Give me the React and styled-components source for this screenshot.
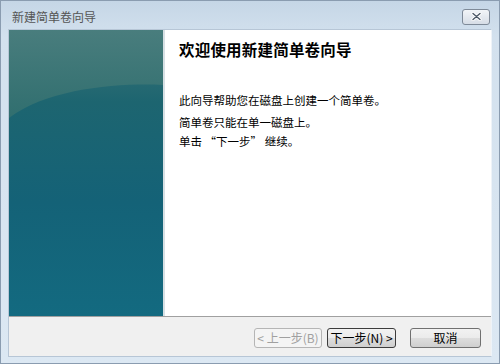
import styled, { createGlobalStyle } from "styled-components"

const Global = createGlobalStyle`
  html, body { margin: 0; padding: 0; }
  body {
    width: 500px;
    height: 364px;
    overflow: hidden;
    font-family: "Noto Sans CJK SC", "Liberation Sans", sans-serif;
  }
`

const Window = styled.div`
  width: 500px;
  height: 364px;
  box-sizing: border-box;
  background: linear-gradient(180deg, #c5d6e6 0%, #d3e1ee 10%, #dce8f3 100%);
  border: 1px solid #8a9cb0;
  display: flex;
  flex-direction: column;
  padding: 0 7px 6px 7px;
`

const TitleBar = styled.div`
  height: 28px;
  display: flex;
  align-items: center;
  justify-content: space-between;
  flex-shrink: 0;
`

const Title = styled.div`
  font-size: 12px;
  color: #555;
  padding-left: 4px;
  padding-top: 2px;
`

const CloseButton = styled.div`
  width: 28px;
  height: 16px;
  margin-top: 3px;
  margin-right: 2px;
  box-sizing: border-box;
  border: 1px solid #7e8a98;
  border-radius: 3px;
  background: linear-gradient(180deg, #f2f5f8, #d6dde6);
  display: flex;
  align-items: center;
  justify-content: center;
`

const Body = styled.div`
  flex: 1;
  display: flex;
  flex-direction: column;
  border: 1px solid #b7c6d6;
  border-right-color: #eef3f8;
`

const Main = styled.div`
  height: 286px;
  display: flex;
  background: #ffffff;
  border-bottom: 1px solid #a0a0a0;
`

const SidePanel = styled.div`
  width: 154px;
  flex-shrink: 0;
  position: relative;
  background: linear-gradient(180deg, #3f7677 0%, #1d6570 25%, #146277 60%, #136a80 100%);
  border-right: 2px solid #d7e0e4;
  overflow: hidden;
`

const Content = styled.div`
  flex: 1;
  padding: 8px 0 0 14px;
  color: #000;
`

const Heading = styled.h1`
  margin: 0;
  font-size: 15.5px;
  font-weight: bold;
  line-height: 22px;
  letter-spacing: 0.2px;
`

const Text = styled.p`
  margin: 0;
  font-size: 11.5px;
  line-height: 14px;
  margin-top: ${(p) => p.$gap}px;
`

const Footer = styled.div`
  flex: 1;
  background: #f0f0f0;
  display: flex;
  align-items: center;
  justify-content: flex-end;
  padding: 0 10px 0 0;
`

const Button = styled.div`
  width: ${(p) => p.$w}px;
  height: 20px;
  box-sizing: border-box;
  margin-left: ${(p) => p.$ml}px;
  border: 1px solid ${(p) => (p.$disabled ? "#b5b5b5" : p.$focus ? "#3c3c3c" : "#707070")};
  border-radius: 3px;
  background: ${(p) =>
    p.$disabled ? "#f4f4f4" : "linear-gradient(180deg, #f2f2f2 0%, #ebebeb 50%, #dddddd 51%, #cfcfcf 100%)"};
  color: ${(p) => (p.$disabled ? "#a0a0a0" : "#000")};
  font-size: 12px;
  display: flex;
  align-items: center;
  justify-content: center;
  margin-top: 2px;
`

const Panel = () => (
  <svg width="154" height="286" viewBox="0 0 154 286" style={{ position: "absolute", inset: 0 }}>
    <defs>
      <linearGradient id="hl" x1="0" y1="0" x2="0" y2="1">
        <stop offset="0" stopColor="#4a7e7e" />
        <stop offset="1" stopColor="#33706f" />
      </linearGradient>
    </defs>
    <path d="M0 0 H154 V55 C110 53 40 58 0 88 Z" fill="url(#hl)" opacity="0.9" />
  </svg>
)

export default function App() {
  return (
    <>
      <Global />
      <Window>
        <TitleBar>
          <Title>新建简单卷向导</Title>
          <CloseButton>
            <svg width="11" height="9" viewBox="0 0 11 9">
              <path d="M2 1.5 L9 7.5 M9 1.5 L2 7.5" stroke="#ffffff" strokeWidth="3.2" strokeLinecap="round" />
              <path d="M2 1.5 L9 7.5 M9 1.5 L2 7.5" stroke="#4a5766" strokeWidth="1.4" strokeLinecap="round" />
            </svg>
          </CloseButton>
        </TitleBar>
        <Body>
          <Main>
            <SidePanel>
              <Panel />
            </SidePanel>
            <Content>
              <Heading>欢迎使用新建简单卷向导</Heading>
              <Text $gap={33}>此向导帮助您在磁盘上创建一个简单卷。</Text>
              <Text $gap={8}>简单卷只能在单一磁盘上。</Text>
              <Text $gap={5}>单击 “下一步” 继续。</Text>
            </Content>
          </Main>
          <Footer>
            <Button $w={68} $ml={0} $disabled>&lt; 上一步(B)</Button>
            <Button $w={69} $ml={5} $focus>下一步(N) &gt;</Button>
            <Button $w={71} $ml={14}>取消</Button>
          </Footer>
        </Body>
      </Window>
    </>
  )
}
